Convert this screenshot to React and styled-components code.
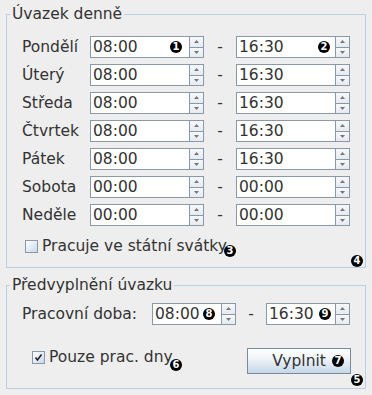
import React from 'react';
import styled, { createGlobalStyle } from 'styled-components';

const days = [
  { name: 'Pondělí', from: '08:00', to: '16:30', badges: ['1', '2'] },
  { name: 'Úterý', from: '08:00', to: '16:30' },
  { name: 'Středa', from: '08:00', to: '16:30' },
  { name: 'Čtvrtek', from: '08:00', to: '16:30' },
  { name: 'Pátek', from: '08:00', to: '16:30' },
  { name: 'Sobota', from: '00:00', to: '00:00' },
  { name: 'Neděle', from: '00:00', to: '00:00' },
];

const GlobalStyle = createGlobalStyle`
  html, body {
    margin: 0;
    padding: 0;
    background: #eeeeee;
  }
  body {
    font-family: 'DejaVu Sans', 'Liberation Sans', sans-serif;
    font-size: 15.5px;
    color: #333333;
  }
`;

const Window = styled.div`
  width: 372px;
  height: 395px;
  box-sizing: border-box;
  padding: 5px 6px 0 6px;
  display: flex;
  flex-direction: column;
  gap: 8px;
  background: #eeeeee;
  overflow: hidden;
`;

const Group = styled.fieldset`
  position: relative;
  margin: 0;
  padding: 0;
  min-width: 0;
  border: 1px solid #b8cfe5;
`;

const Legend = styled.legend`
  margin-left: 3px;
  padding: 0 2px;
  font-size: 15.5px;
  line-height: 18px;
  color: #333333;
`;

const DayGrid = styled.div`
  display: grid;
  grid-template-columns: ${(p) => p.$cols};
  grid-auto-rows: 22px;
  row-gap: 6px;
  align-items: center;
  padding: ${(p) => p.$pad};
`;

const Label = styled.span`
  font-size: 15.5px;
  line-height: 22px;
  white-space: nowrap;
`;

const Dash = styled.span`
  text-align: center;
  font-size: 15.5px;
  line-height: 22px;
`;

const Spin = styled.div`
  display: flex;
  height: 22px;
`;

const TextBox = styled.div`
  position: relative;
  box-sizing: border-box;
  width: ${(p) => p.$w}px;
  height: 22px;
  padding-left: 2px;
  background: #ffffff;
  border: 1px solid #8a99a9;
  font-size: 15.5px;
  line-height: 20px;
  color: #333333;
`;

const Arrows = styled.div`
  display: flex;
  flex-direction: column;
  width: 14px;
`;

const ArrowButton = styled.div`
  flex: 1;
  box-sizing: border-box;
  display: flex;
  align-items: center;
  justify-content: center;
  border: 1px solid #8a99a9;
  border-left: none;
  border-top: ${(p) => (p.$down ? 'none' : '1px solid #8a99a9')};
  background: linear-gradient(#f6f8fa, #e6ebf1);
`;

const Badge = styled.span`
  position: absolute;
  width: 12px;
  height: 12px;
  border-radius: 50%;
  background: #000000;
  color: #ffffff;
  font-family: 'DejaVu Sans', sans-serif;
  font-size: 10px;
  font-weight: bold;
  line-height: 12px;
  text-align: center;
  ${(p) => p.$top !== undefined && `top: ${p.$top}px;`}
  ${(p) => p.$left !== undefined && `left: ${p.$left}px;`}
  ${(p) => p.$right !== undefined && `right: ${p.$right}px;`}
  ${(p) => p.$bottom !== undefined && `bottom: ${p.$bottom}px;`}
`;

const CheckRow = styled.label`
  position: relative;
  display: flex;
  align-items: center;
  gap: 4px;
  height: 18px;
  margin: ${(p) => p.$margin};
  font-size: 15.5px;
  white-space: nowrap;
`;

const Box = styled.span`
  box-sizing: border-box;
  width: 13px;
  height: 13px;
  display: flex;
  align-items: center;
  justify-content: center;
  border: 1px solid #8a99a9;
  background: linear-gradient(135deg, #ffffff, #c9d9ea);
`;

const BottomRow = styled.div`
  display: flex;
  justify-content: space-between;
  align-items: flex-start;
  margin-top: 23px;
  padding: 0 14px 14px 22px;
`;

const Button = styled.button`
  position: relative;
  box-sizing: border-box;
  width: 104px;
  height: 26px;
  padding: 0;
  border: 1px solid #7a8a99;
  background: linear-gradient(#ffffff 0%, #f2f6fa 35%, #c6d7e9 100%);
  font-family: 'DejaVu Sans', sans-serif;
  font-size: 15.5px;
  color: #333333;
`;

function Arrow({ down }) {
  return (
    <svg width="5" height="3" viewBox="0 0 5 3">
      <path d={down ? 'M0 0 H5 L2.5 3 Z' : 'M0 3 H5 L2.5 0 Z'} fill="#777" />
    </svg>
  );
}

function TimeField({ value, width, badge, badgeRight = 4 }) {
  return (
    <Spin>
      <TextBox $w={width}>
        {value}
        {badge && (
          <Badge $top={4} $right={badgeRight}>
            {badge}
          </Badge>
        )}
      </TextBox>
      <Arrows>
        <ArrowButton>
          <Arrow />
        </ArrowButton>
        <ArrowButton $down>
          <Arrow down />
        </ArrowButton>
      </Arrows>
    </Spin>
  );
}

function Check({ checked }) {
  return (
    <Box>
      {checked && (
        <svg width="9" height="9" viewBox="0 0 9 9">
          <path d="M1.5 4.5 L3.5 7 L7.5 1.5" fill="none" stroke="#222" strokeWidth="1.6" />
        </svg>
      )}
    </Box>
  );
}

export default function App() {
  return (
    <>
      <GlobalStyle />
      <Window>
        <Group>
          <Legend>Úvazek denně</Legend>
          <DayGrid $cols="68px 114px 32px 114px" $pad="13px 0 0 15px">
            {days.map((d) => (
              <React.Fragment key={d.name}>
                <Label>{d.name}</Label>
                <TimeField value={d.from} width={100} badge={d.badges && d.badges[0]} badgeRight={7} />
                <Dash>-</Dash>
                <TimeField value={d.to} width={100} badge={d.badges && d.badges[1]} badgeRight={5} />
              </React.Fragment>
            ))}
          </DayGrid>
          <CheckRow $margin="11px 0 12px 18px">
            <Check />
            Pracuje ve státní svátky
            <Badge $top={8} $left={199}>3</Badge>
          </CheckRow>
          <Badge $right={2} $bottom={0}>4</Badge>
        </Group>

        <Group>
          <Legend>Předvyplnění úvazku</Legend>
          <DayGrid $cols="130px 84px 30px 84px" $pad="9px 0 0 15px">
            <Label>Pracovní doba:</Label>
            <TimeField value="08:00" width={70} badge="8" badgeRight={6} />
            <Dash>-</Dash>
            <TimeField value="16:30" width={70} badge="9" badgeRight={4} />
          </DayGrid>
          <BottomRow>
            <CheckRow $margin="0 0 0 3px">
              <Check checked />
              Pouze prac. dny
              <Badge $top={11} $left={138}>6</Badge>
            </CheckRow>
            <Button>
              Vyplnit
              <Badge $top={6} $right={6}>7</Badge>
            </Button>
          </BottomRow>
          <Badge $right={2} $bottom={2}>5</Badge>
        </Group>
      </Window>
    </>
  );
}
